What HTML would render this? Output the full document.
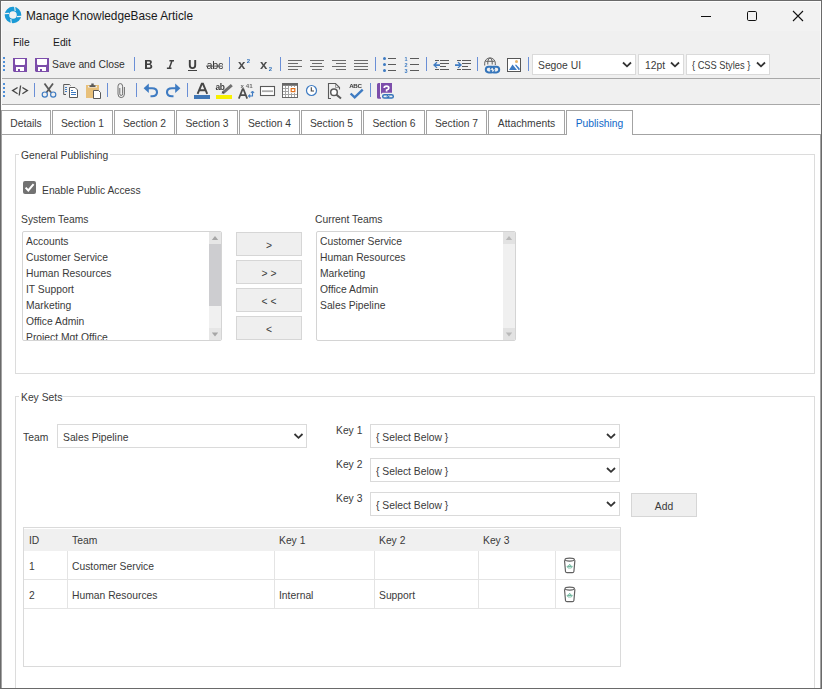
<!DOCTYPE html>
<html><head><meta charset="utf-8"><style>
html,body{margin:0;padding:0;width:822px;height:689px;overflow:hidden;background:#fff}
*{box-sizing:border-box}
body{position:relative;font-family:"Liberation Sans",sans-serif;color:#3a3a3a}
.a{position:absolute}
.t{position:absolute;white-space:nowrap;font-size:11.6px;line-height:14px;transform-origin:0 0;transform:scaleX(.89)}
.sep{position:absolute;width:1px;height:14px;background:#6a8fd6}
.tab{position:absolute;top:110px;height:25px;border:1px solid #a3a3a3;background:#fff}
.tab span{position:absolute;left:0;right:0;top:5px;text-align:center;white-space:nowrap;font-size:11.6px;line-height:14px;transform-origin:50% 0;transform:scaleX(.89)}
.dd{position:absolute;border:1px solid #dadada;background:#fff}
.btn{position:absolute;border:1px solid #d6d6d6;background:#efefef;width:66px;height:24px}
.btn span{position:absolute;left:0;right:0;top:5px;text-align:center;white-space:nowrap;font-size:11.6px;line-height:14px;transform-origin:50% 0;transform:scaleX(.89)}
.grip{position:absolute;left:3px;width:2px;height:14px;background:repeating-linear-gradient(to bottom,#4f8fd8 0 2px,transparent 2px 4px)}
.hl{position:absolute;height:1px;background:#e4e4e4}
.vl{position:absolute;width:1px;background:#e4e4e4}
</style></head><body>

<!-- chrome backgrounds -->
<div class="a" style="left:0;top:0;width:822px;height:31px;background:#f2f2f2"></div>
<div class="a" style="left:0;top:31px;width:822px;height:74px;background:#f0f0f0"></div>
<div class="a" style="left:0;top:78px;width:822px;height:1px;background:#a8a8a8"></div>
<div class="a" style="left:0;top:104px;width:822px;height:1px;background:#a8a8a8"></div>

<!-- title -->
<div class="t" style="left:26px;top:9px;font-size:13px;transform:scaleX(.91);color:#1a1a1a">Manage KnowledgeBase Article</div>

<!-- menu -->
<div class="t" style="left:13px;top:35px;color:#1a1a1a">File</div>
<div class="t" style="left:53px;top:35px;color:#1a1a1a">Edit</div>

<!-- toolbar 1 -->
<div class="grip" style="top:57px"></div>
<div class="t" style="left:52px;top:57px;color:#303030">Save and Close</div>
<div class="sep" style="left:134px;top:57px"></div>
<div class="sep" style="left:229px;top:57px"></div>
<div class="sep" style="left:280px;top:57px"></div>
<div class="sep" style="left:375px;top:57px"></div>
<div class="sep" style="left:426px;top:57px"></div>
<div class="sep" style="left:477px;top:57px"></div>
<div class="sep" style="left:528px;top:57px"></div>

<div class="dd" style="left:532px;top:54px;width:104px;height:21px"></div>
<div class="t" style="left:538px;top:58px">Segoe UI</div>
<div class="dd" style="left:638px;top:54px;width:46px;height:21px"></div>
<div class="t" style="left:645px;top:58px">12pt</div>
<div class="dd" style="left:686px;top:54px;width:84px;height:21px"></div>
<div class="t" style="left:692px;top:58px;transform:scaleX(.8)">{ CSS Styles }</div>

<!-- toolbar 2 -->
<div class="grip" style="top:83px"></div>
<div class="sep" style="left:34px;top:83px"></div>
<div class="sep" style="left:107px;top:83px"></div>
<div class="sep" style="left:136px;top:83px"></div>
<div class="sep" style="left:187px;top:83px"></div>
<div class="sep" style="left:370px;top:83px"></div>

<!-- tab panel + tabs -->
<div class="a" style="left:1px;top:134px;width:820px;height:555px;border:1px solid #a3a3a3;background:#fff"></div>
<div class="tab" style="left:1px;width:50px"><span>Details</span></div>
<div class="tab" style="left:52px;width:61px"><span>Section 1</span></div>
<div class="tab" style="left:114px;width:61px"><span>Section 2</span></div>
<div class="tab" style="left:176px;width:62px"><span>Section 3</span></div>
<div class="tab" style="left:239px;width:61px"><span>Section 4</span></div>
<div class="tab" style="left:301px;width:61px"><span>Section 5</span></div>
<div class="tab" style="left:363px;width:62px"><span>Section 6</span></div>
<div class="tab" style="left:426px;width:61px"><span>Section 7</span></div>
<div class="tab" style="left:488px;width:77px"><span>Attachments</span></div>
<div class="tab" style="left:566px;width:67px;border-bottom:none;height:25px"><span style="color:#1068c8">Publishing</span></div>

<!-- General Publishing group -->
<div class="a" style="left:15px;top:154px;width:800px;height:220px;border:1px solid #dcdcdc"></div>
<div class="a" style="left:19px;top:150px;width:91px;height:8px;background:#fff"></div>
<div class="t" style="left:21px;top:148px">General Publishing</div>

<div class="a" style="left:23px;top:181px;width:13px;height:13px;background:#727272;border-radius:2px"></div>
<svg class="a" style="left:23px;top:181px" width="13" height="13"><path d="M2.6 6.6 L5.3 9.4 L10.6 3.1" fill="none" stroke="#fff" stroke-width="2"/></svg>
<div class="t" style="left:42px;top:183px">Enable Public Access</div>
<div class="t" style="left:21px;top:212px">System Teams</div>
<div class="t" style="left:315px;top:212px">Current Teams</div>

<!-- system teams list -->
<div class="a" style="left:22px;top:231px;width:200px;height:110px;border:1px solid #d4d4d4;border-radius:2px;background:#fff;overflow:hidden">
  <div class="t" style="left:3px;top:2px">Accounts</div>
  <div class="t" style="left:3px;top:18px">Customer Service</div>
  <div class="t" style="left:3px;top:34px">Human Resources</div>
  <div class="t" style="left:3px;top:50px">IT Support</div>
  <div class="t" style="left:3px;top:66px">Marketing</div>
  <div class="t" style="left:3px;top:82px">Office Admin</div>
  <div class="t" style="left:3px;top:98px">Project Mgt Office</div>
  <div class="a" style="left:186px;top:0;width:12px;height:108px;background:#f0f0f0"></div>
  <div class="a" style="left:186px;top:0;width:12px;height:12px;background:#e6e6e6"></div>
  <div class="a" style="left:186px;top:12px;width:12px;height:62px;background:#cdcdd0"></div>
  <div class="a" style="left:186px;top:96px;width:12px;height:12px;background:#e6e6e6"></div>
  <svg class="a" style="left:186px;top:0" width="12" height="108"><path d="M2.8 8 L6 4 L9.2 8Z" fill="#a6a6a6"/><path d="M2.8 100.5 L6 104.5 L9.2 100.5Z" fill="#a6a6a6"/></svg>
</div>

<!-- move buttons -->
<div class="btn" style="left:236px;top:232px"><span>&gt;</span></div>
<div class="btn" style="left:236px;top:260px"><span>&gt; &gt;</span></div>
<div class="btn" style="left:236px;top:288px"><span>&lt; &lt;</span></div>
<div class="btn" style="left:236px;top:316px"><span>&lt;</span></div>

<!-- current teams list -->
<div class="a" style="left:316px;top:231px;width:200px;height:110px;border:1px solid #d4d4d4;border-radius:2px;background:#fff;overflow:hidden">
  <div class="t" style="left:3px;top:2px">Customer Service</div>
  <div class="t" style="left:3px;top:18px">Human Resources</div>
  <div class="t" style="left:3px;top:34px">Marketing</div>
  <div class="t" style="left:3px;top:50px">Office Admin</div>
  <div class="t" style="left:3px;top:66px">Sales Pipeline</div>
  <div class="a" style="left:186px;top:0;width:12px;height:108px;background:#f0f0f0"></div>
  <div class="a" style="left:186px;top:0;width:12px;height:12px;background:#e2e2e2"></div>
  <div class="a" style="left:186px;top:96px;width:12px;height:12px;background:#e2e2e2"></div>
  <svg class="a" style="left:186px;top:0" width="12" height="108"><path d="M2.8 8 L6 4 L9.2 8Z" fill="#b9b9b9"/><path d="M2.8 100.5 L6 104.5 L9.2 100.5Z" fill="#b9b9b9"/></svg>
</div>

<!-- Key Sets group -->
<div class="a" style="left:15px;top:396px;width:800px;height:300px;border:1px solid #dcdcdc"></div>
<div class="a" style="left:19px;top:392px;width:42px;height:8px;background:#fff"></div>
<div class="t" style="left:21px;top:390px">Key Sets</div>

<div class="t" style="left:23px;top:430px">Team</div>
<div class="dd" style="left:57px;top:424px;width:250px;height:24px"></div>
<div class="t" style="left:63px;top:430px">Sales Pipeline</div>

<div class="t" style="left:336px;top:423px">Key 1</div>
<div class="t" style="left:336px;top:457px">Key 2</div>
<div class="t" style="left:336px;top:491px">Key 3</div>
<div class="dd" style="left:370px;top:424px;width:250px;height:24px"></div>
<div class="dd" style="left:370px;top:458px;width:250px;height:24px"></div>
<div class="dd" style="left:370px;top:492px;width:250px;height:24px"></div>
<div class="t" style="left:376px;top:430px">{ Select Below }</div>
<div class="t" style="left:376px;top:464px">{ Select Below }</div>
<div class="t" style="left:376px;top:498px">{ Select Below }</div>
<div class="btn" style="left:631px;top:493px"><span>Add</span></div>

<!-- table -->
<div class="a" style="left:23px;top:527px;width:598px;height:140px;border:1px solid #dadada;background:#fff"></div>
<div class="a" style="left:24px;top:529px;width:596px;height:22px;background:#f0f0f0"></div>
<div class="hl" style="left:24px;top:579px;width:596px"></div>
<div class="hl" style="left:24px;top:608px;width:596px"></div>
<div class="vl" style="left:67px;top:551px;height:57px"></div>
<div class="vl" style="left:274px;top:551px;height:57px"></div>
<div class="vl" style="left:374px;top:551px;height:57px"></div>
<div class="vl" style="left:478px;top:551px;height:57px"></div>
<div class="vl" style="left:555px;top:551px;height:57px"></div>
<div class="t" style="left:29px;top:533px">ID</div>
<div class="t" style="left:72px;top:533px">Team</div>
<div class="t" style="left:279px;top:533px">Key 1</div>
<div class="t" style="left:379px;top:533px">Key 2</div>
<div class="t" style="left:483px;top:533px">Key 3</div>
<div class="t" style="left:29px;top:559px">1</div>
<div class="t" style="left:72px;top:559px">Customer Service</div>
<div class="t" style="left:29px;top:588px">2</div>
<div class="t" style="left:72px;top:588px">Human Resources</div>
<div class="t" style="left:279px;top:588px">Internal</div>
<div class="t" style="left:379px;top:588px">Support</div>

<!-- ICONS -->
<svg class="a" style="left:0;top:0;will-change:transform" width="822" height="105">
  <!-- app icon -->
  <g>
    <circle cx="13" cy="15" r="6.05" fill="none" stroke="#1a9ad6" stroke-width="4.5"/>
    <path d="M14.6 6.5 L15.2 11 M21.5 16.4 L17 16.6 M11.4 23.5 L10.8 19 M4.5 13.6 L9 13.4" stroke="#f3f3f3" stroke-width="1.1"/>
  </g>
  <!-- window controls -->
  <rect x="701" y="16" width="10" height="1" fill="#111"/>
  <rect x="747.5" y="11.5" width="9" height="9" rx="1.2" fill="none" stroke="#111" stroke-width="1"/>
  <path d="M793 11 L803 21 M803 11 L793 21" stroke="#111" stroke-width="1.1"/>

  <!-- floppy icons -->
  <g>
    <path d="M13 58 H27 V72 H14 L13 71 Z" fill="#7c4daa"/>
    <path d="M15 59 H25 V64 Q25 65 24 65 H16 Q15 65 15 64 Z" fill="#fff"/>
    <path d="M16 67 H24 V71 H20 V69 H18 V71 H16 Z" fill="#fff"/>
  </g>
  <g transform="translate(22 0)">
    <path d="M13 58 H27 V72 H14 L13 71 Z" fill="#7c4daa"/>
    <path d="M15 59 H25 V64 Q25 65 24 65 H16 Q15 65 15 64 Z" fill="#fff"/>
    <path d="M16 67 H24 V71 H20 V69 H18 V71 H16 Z" fill="#fff"/>
  </g>

  <!-- B -->
  <path fill-rule="evenodd" fill="#404040" d="M145 60 H149.6 Q151.9 60 151.9 62.1 Q151.9 63.7 150.5 64.2 Q152.3 64.7 152.3 66.6 Q152.3 69 149.6 69 H145 Z M147 61.6 H149.1 Q150 61.6 150 62.6 Q150 63.6 149.1 63.6 H147 Z M147 65.1 H149.4 Q150.4 65.1 150.4 66.2 Q150.4 67.4 149.4 67.4 H147 Z"/>
  <!-- I -->
  <path d="M169.4 60.7 H174 M166.9 68.3 H171.5 M172 60.7 L169.3 68.3" fill="none" stroke="#404040" stroke-width="1.5"/>
  <!-- U -->
  <path d="M189.8 60 V65.3 Q189.8 68.1 192.5 68.1 Q195.2 68.1 195.2 65.3 V60" fill="none" stroke="#404040" stroke-width="1.9"/>
  <rect x="188" y="70" width="9" height="1" fill="#404040"/>
  <!-- abc strike -->
  <text x="206.6" y="69" font-family="Liberation Sans" font-size="10.8" letter-spacing="-0.3" fill="#333">abc</text>
  <rect x="206" y="65.6" width="17" height="1" fill="#555"/>
  <!-- x2 super/sub -->
  <text x="238.1" y="69" font-family="Liberation Sans" font-size="13.2" font-weight="bold" fill="#4e4e4e">x</text>
  <text x="246.7" y="63" font-family="Liberation Sans" font-size="6" font-weight="bold" fill="#2e6fb8">2</text>
  <text x="260.1" y="69" font-family="Liberation Sans" font-size="13.2" font-weight="bold" fill="#4e4e4e">x</text>
  <text x="268.7" y="71" font-family="Liberation Sans" font-size="6" font-weight="bold" fill="#2e6fb8">2</text>

  <!-- align icons -->
  <g fill="#6b6b6b">
    <rect x="288" y="60" width="14" height="1"/><rect x="288" y="63" width="10" height="1"/><rect x="288" y="66" width="14" height="1"/><rect x="288" y="69" width="10" height="1"/>
    <rect x="310" y="60" width="14" height="1"/><rect x="312" y="63" width="10" height="1"/><rect x="310" y="66" width="14" height="1"/><rect x="312" y="69" width="10" height="1"/>
    <rect x="332" y="60" width="14" height="1"/><rect x="336" y="63" width="10" height="1"/><rect x="332" y="66" width="14" height="1"/><rect x="336" y="69" width="10" height="1"/>
    <rect x="354" y="60" width="14" height="1"/><rect x="354" y="63" width="14" height="1"/><rect x="354" y="66" width="14" height="1"/><rect x="354" y="69" width="14" height="1"/>
  </g>
  <!-- bullets -->
  <g fill="#3e7bc2"><circle cx="384.5" cy="58.5" r="1.5"/><circle cx="384.5" cy="64.5" r="1.5"/><circle cx="384.5" cy="70.5" r="1.5"/></g>
  <g fill="#5a5a5a"><rect x="388" y="58" width="8" height="1"/><rect x="388" y="64" width="8" height="1"/><rect x="388" y="70" width="8" height="1"/>
  <rect x="410" y="58" width="9" height="1"/><rect x="410" y="64" width="9" height="1"/><rect x="410" y="70" width="9" height="1"/></g>
  <g font-family="Liberation Sans" font-size="5.5" font-weight="bold" fill="#3e7bc2">
    <text x="404.6" y="61">1</text><text x="404.6" y="67">2</text><text x="404.6" y="73">3</text>
  </g>
  <!-- outdent / indent -->
  <g fill="#5a5a5a">
    <rect x="435" y="60" width="4" height="1"/><rect x="440" y="60" width="9" height="1"/><rect x="440" y="63" width="9" height="1"/><rect x="440" y="66" width="6" height="1"/><rect x="435" y="69" width="4" height="1"/><rect x="440" y="69" width="9" height="1"/>
    <rect x="457" y="60" width="4" height="1"/><rect x="462" y="60" width="9" height="1"/><rect x="462" y="63" width="9" height="1"/><rect x="462" y="66" width="6" height="1"/><rect x="457" y="69" width="4" height="1"/><rect x="462" y="69" width="9" height="1"/>
  </g>
  <g fill="#3e7bc2">
    <path d="M433 65 L436.5 61.8 L437.5 62.6 L435.8 64.2 H440 V65.9 H435.8 L437.5 67.4 L436.5 68.2 Z"/>
    <path d="M462 65 L458.5 61.8 L457.5 62.6 L459.2 64.2 H455 V65.9 H459.2 L457.5 67.4 L458.5 68.2 Z"/>
  </g>
  <!-- globe link -->
  <g fill="none" stroke="#606060" stroke-width="1">
    <path d="M484.7 65.5 V63.2 A5.3 5.3 0 0 1 495.3 63.2 V65"/>
    <path d="M485.5 61.3 H494.5"/>
    <path d="M487.8 64.5 V61.5 Q488.2 58.4 490 57.9 Q491.8 58.4 492.2 61.5 V64.5"/>
  </g>
  <g fill="none" stroke="#3575ba" stroke-width="2">
    <rect x="485.8" y="66.8" width="8.4" height="5.6" rx="2.8"/>
    <rect x="490.8" y="66.8" width="8.4" height="5.6" rx="2.8"/>
  </g>
  <path d="M490.6 70.2 L492.6 68" stroke="#f0f0f0" stroke-width="1.1"/>
  <path d="M492.4 71.6 L494.4 69.4" stroke="#f0f0f0" stroke-width="1.1"/>
  <!-- image -->
  <rect x="507.5" y="58.5" width="13" height="13" fill="#fff" stroke="#555" stroke-width="1"/>
  <circle cx="516.5" cy="61.5" r="1.5" fill="#e6b46a"/>
  <path d="M509 70 L512.5 64.5 L517 70 Z M515 65 L516 64.4 L519.6 68.2 V70 H518.6 Z" fill="#3e7bc2"/>

  <!-- dropdown chevrons -->
  <g fill="none" stroke="#333" stroke-width="1.8">
    <path d="M623 62.5 L627 66.3 L631 62.5"/>
    <path d="M671 62.5 L675 66.3 L679 62.5"/>
    <path d="M757 62.5 L761 66.3 L765 62.5"/>
  </g>

  <!-- toolbar 2 -->
  <g fill="none" stroke="#474747" stroke-width="1.3">
    <path d="M17.6 87.5 L12.6 90.6 L17.6 93.7"/>
    <path d="M22.4 87.5 L27.4 90.6 L22.4 93.7"/>
    <path d="M20.6 85.5 L19.2 95.5"/>
  </g>
  <!-- scissors -->
  <path d="M44.5 83.5 L51 92.5 M53 83.5 L46.5 92.5" stroke="#5a5a5a" stroke-width="1.8"/>
  <circle cx="44.8" cy="94.6" r="2.6" fill="none" stroke="#3e7bc2" stroke-width="1.2"/>
  <circle cx="53.2" cy="94.6" r="2.6" fill="none" stroke="#3e7bc2" stroke-width="1.2"/>
  <!-- copy -->
  <path d="M66 94.5 H63.7 V84.5 H69.5 L70.5 85.5" fill="none" stroke="#595959" stroke-width="1"/>
  <path d="M69.5 97.5 V87.5 H75 L77.5 90 V97.5 Z" fill="#fff" stroke="#595959" stroke-width="1"/>
  <g fill="#3e7bc2"><rect x="65" y="87" width="2" height="1"/><rect x="65" y="89" width="2" height="1"/><rect x="65" y="91" width="2" height="1"/>
  <rect x="71" y="90" width="2" height="1"/><rect x="71" y="92" width="5" height="1"/><rect x="71" y="94" width="5" height="1"/></g>
  <!-- paste -->
  <rect x="86" y="85" width="13" height="13" fill="#e8c07a"/>
  <rect x="88" y="86" width="9" height="1.5" fill="#f0f0f0"/>
  <path d="M89.5 87 H95.5 V85.3 H93.7 V83.5 H91.3 V85.3 H89.5 Z" fill="#5a5a5a"/>
  <path d="M93.5 98.5 V90.5 H98.5 L100.5 92.5 V98.5 Z" fill="#fff" stroke="#595959" stroke-width="1"/>
  <!-- paperclip -->
  <path d="M119.8 88 V93.8 Q119.8 95.5 121.2 95.5 Q122.6 95.5 122.6 93.8 V86.2 Q122.6 83.6 120.3 83.6 Q118 83.6 118 86.2 V94 Q118 97.6 121.2 97.6 Q124.4 97.6 124.4 94 V87" fill="none" stroke="#6e6e6e" stroke-width="1"/>
  <!-- undo redo -->
  <g fill="none" stroke="#3e7bc2" stroke-width="2.1">
    <path d="M146.5 88.2 H152 Q157 88.2 157 92.2 Q157 96.2 152 96.2 H150.5"/>
    <path d="M177.5 88.2 H172 Q167 88.2 167 92.2 Q167 96.2 172 96.2 H173.5"/>
  </g>
  <path d="M143.6 88.2 L148.8 83.5 V92.9 Z" fill="#3e7bc2"/>
  <path d="M180.4 88.2 L175.2 83.5 V92.9 Z" fill="#3e7bc2"/>
  <!-- font color -->
  <path d="M197.6 93.8 L201.8 83.8 H203 L207.2 93.8 M199.4 90.2 H205.4" fill="none" stroke="#474747" stroke-width="1.9"/>
  <rect x="194" y="95" width="16" height="4" fill="#3f76b6"/>
  <!-- highlight -->
  <text x="215.6" y="90.4" font-family="Liberation Sans" font-size="8.4" font-weight="bold" letter-spacing="-0.5" fill="#3a3a3a">ab</text>
  <path d="M231.8 85.2 L222.6 93.2" stroke="#707070" stroke-width="3"/>
  <path d="M222.8 91.2 L221.5 93.8 L224 92.8 Z" fill="#444"/>
  <rect x="216" y="95" width="16" height="4" fill="#f7f000"/>
  <!-- special char -->
  <text x="240.6" y="88" font-family="Liberation Sans" font-size="6.2" font-weight="bold" fill="#6e6e6e">x 41</text>
  <path d="M238.8 98.6 L242.6 89.2 H243.4 L247.2 98.6 M240.2 95.2 H245.8" fill="none" stroke="#4d4d4d" stroke-width="1.7"/>
  <path d="M252.5 92.5 V96 H249.5" fill="none" stroke="#3e7bc2" stroke-width="1.1"/>
  <path d="M251 92.6 L252.5 91 L254 92.6 Z M249.8 94.6 L248.2 96 L249.8 97.4Z" fill="#3e7bc2" stroke="#3e7bc2" stroke-width="0.8"/>
  <!-- hr -->
  <rect x="260.5" y="86.5" width="14" height="9" fill="#fff" stroke="#5a5a5a" stroke-width="1.1"/>
  <rect x="262" y="90.3" width="11" height="1.8" fill="#aaa"/>
  <!-- calendar -->
  <rect x="282" y="83" width="16" height="15" fill="#a4a4a4"/>
  <rect x="282" y="83" width="16" height="2.5" fill="#666"/>
  <rect x="282" y="83" width="1" height="15" fill="#666"/><rect x="297" y="83" width="1" height="15" fill="#666"/><rect x="282" y="97" width="16" height="1" fill="#666"/>
  <g fill="#fff">
    <rect x="283" y="86" width="2" height="2"/><rect x="286" y="86" width="2" height="2"/><rect x="289" y="86" width="2" height="2"/><rect x="292" y="86" width="2" height="2"/><rect x="295" y="86" width="2" height="2"/>
    <rect x="283" y="89" width="2" height="2"/><rect x="286" y="89" width="2" height="2"/><rect x="289" y="89" width="2" height="2"/><rect x="292" y="89" width="2" height="2"/><rect x="295" y="89" width="2" height="2"/>
    <rect x="283" y="92" width="2" height="2"/><rect x="286" y="92" width="2" height="2"/><rect x="289" y="92" width="2" height="2"/><rect x="292" y="92" width="2" height="2"/><rect x="295" y="92" width="2" height="2"/>
    <rect x="283" y="95" width="2" height="2"/><rect x="286" y="95" width="2" height="2"/><rect x="289" y="95" width="2" height="2"/><rect x="292" y="95" width="2" height="2"/><rect x="295" y="95" width="2" height="2"/>
    <rect x="289" y="87" width="8" height="6"/>
  </g>
  <rect x="291.2" y="88.6" width="3.6" height="3" fill="none" stroke="#e0701c" stroke-width="1.2"/>
  <!-- clock -->
  <circle cx="311.5" cy="90.5" r="5" fill="#fff" stroke="#3e7bc2" stroke-width="1.2"/>
  <path d="M311.3 87.2 V91 H314" fill="none" stroke="#444" stroke-width="1.1"/>
  <!-- preview -->
  <path d="M331 98.5 H328.5 V83.5 H335.5 L339.5 87.5 V89.5" fill="none" stroke="#5a5a5a" stroke-width="1.1"/>
  <path d="M335.5 84 V87.5 H339" fill="none" stroke="#8a8a8a" stroke-width="0.8"/>
  <circle cx="334" cy="92.3" r="3.3" fill="#fff" stroke="#5a5a5a" stroke-width="1.5"/>
  <path d="M336.5 94.8 L341 98.6" stroke="#5a5a5a" stroke-width="2"/>
  <!-- spell -->
  <text x="349.2" y="87.6" font-family="Liberation Sans" font-size="6.2" font-weight="bold" letter-spacing="-0.3" fill="#383838">ABC</text>
  <path d="M350.6 93.5 L354.7 97.4 L362.7 89.7" fill="none" stroke="#3e7bc2" stroke-width="2.4"/>
  <!-- help link -->
  <path d="M377 84.5 Q377 83 378.5 83 H380 V97.2 H381 V98.8 H378.5 Q377 98.8 377 97.5 Z" fill="#7c4daa"/>
  <path d="M381 83 H392 V92.8 H382.3 L381 94 Z" fill="#7c4daa"/>
  <path d="M384.2 88 Q384.2 86.1 386.5 86.1 Q388.8 86.1 388.8 88 Q388.8 89.3 386.6 90 V91.6" fill="none" stroke="#fff" stroke-width="1.7"/>
  <g fill="none" stroke="#3575ba" stroke-width="1.5">
    <rect x="382.7" y="94.7" width="6" height="3.4" rx="1.7"/>
    <rect x="387.3" y="94.7" width="6" height="3.4" rx="1.7"/>
  </g>
  <path d="M387.6 96.6 L388.6 95.4" stroke="#f0f0f0" stroke-width="0.9"/>
</svg>



<svg class="a" style="left:0;top:400px" width="822" height="220">
  <g fill="none" stroke="#333" stroke-width="1.8">
    <path d="M294.5 34 L298.5 37.8 L302.5 34"/>
    <path d="M607 34 L611 37.8 L615 34"/>
    <path d="M607 68 L611 71.8 L615 68"/>
    <path d="M607 102 L611 105.8 L615 102"/>
  </g>
  <g>
    <path d="M564.5 160.2 L565.5 171.5 Q565.7 172.6 567 172.6 H572.4 Q573.7 172.6 573.9 171.5 L574.9 160.2" fill="#fff" stroke="#606060" stroke-width="1.2"/>
    <ellipse cx="569.7" cy="159.6" rx="4.7" ry="1.5" fill="#fff" stroke="#606060" stroke-width="1.2"/>
    <path d="M567 166.3 H572.4 L571.4 168 H568 Z M569.7 164.2 L568.2 166.3 H571.2 Z" fill="none" stroke="#3a9a78" stroke-width="0.6"/>
  </g>
  <g transform="translate(0 29)">
    <path d="M564.5 160.2 L565.5 171.5 Q565.7 172.6 567 172.6 H572.4 Q573.7 172.6 573.9 171.5 L574.9 160.2" fill="#fff" stroke="#606060" stroke-width="1.2"/>
    <ellipse cx="569.7" cy="159.6" rx="4.7" ry="1.5" fill="#fff" stroke="#606060" stroke-width="1.2"/>
    <path d="M567 166.3 H572.4 L571.4 168 H568 Z M569.7 164.2 L568.2 166.3 H571.2 Z" fill="none" stroke="#3a9a78" stroke-width="0.6"/>
  </g>
</svg>

<!-- window frame -->
<div class="a" style="left:1px;top:1px;width:820px;height:1px;background:#fdfdfd"></div>
<div class="a" style="left:1px;top:1px;width:1px;height:109px;background:#fafafa"></div>
<div class="a" style="left:820px;top:1px;width:1px;height:133px;background:#fafafa"></div>
<div class="a" style="left:0;top:0;width:822px;height:689px;border:1px solid #6a6a6a"></div>
</body></html>
